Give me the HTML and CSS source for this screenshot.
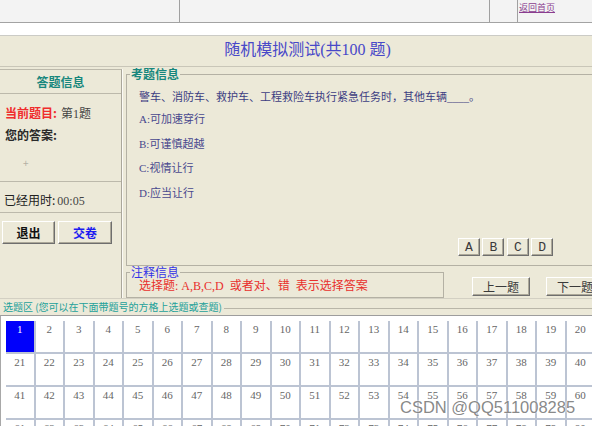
FILE: index.html
```html
<!DOCTYPE html>
<html lang="zh-CN">
<head>
<meta charset="utf-8">
<title>随机模拟测试</title>
<link rel="stylesheet" href="styles.css">
</head>
<body>
<div class="page">
  <div class="topbar">
    <div class="tb-cell"></div>
    <div class="tb-cell"></div>
    <div class="tb-cell"></div>
    <div class="tb-cell tb-link"><a href="#">返回首页</a></div>
  </div>
  <div class="exam">
    <h1 class="title">随机模拟测试(共100 题)</h1>
    <div class="main">
      <aside class="side">
        <div class="side-head">答题信息</div>
        <div class="side-info">
          <p class="row"><span class="lbl-red">当前题目:</span><span class="val">第1题</span></p>
          <p class="row lbl-bold">您的答案:</p>
          <p class="row plus">+</p>
        </div>
        <div class="side-time"><span>已经用时:</span><span class="val">00:05</span></div>
        <div class="side-btns">
          <button class="btn btn-side">退出</button>
          <button class="btn btn-side btn-blue">交卷</button>
        </div>
      </aside>
      <div class="content">
        <fieldset class="fs fs-q">
          <legend class="lg lg-teal">考题信息</legend>
          <p class="q">警车、消防车、救护车、工程救险车执行紧急任务时，其他车辆____。</p>
          <ul class="opts">
            <li>A:可加速穿行</li>
            <li>B:可谨慎超越</li>
            <li>C:视情让行</li>
            <li>D:应当让行</li>
          </ul>
          <div class="abcd">
            <button class="btn btn-opt">A</button>
            <button class="btn btn-opt">B</button>
            <button class="btn btn-opt">C</button>
            <button class="btn btn-opt">D</button>
          </div>
        </fieldset>
        <div class="note-row">
          <fieldset class="fs fs-note">
            <legend class="lg lg-blue">注释信息</legend>
            <p class="note">选择题: A,B,C,D &nbsp;或者对、错 &nbsp;表示选择答案</p>
          </fieldset>
          <button class="btn btn-nav btn-prev">上一题</button>
          <button class="btn btn-nav btn-next">下一题</button>
        </div>
      </div>
    </div>
    <div class="pick">
      <div class="pick-head"><span class="pick-title">选题区 (您可以在下面带题号的方格上选题或查题)</span><span class="rule"></span></div>
      <div class="grid">
        <div class="cell cell-on">1</div><div class="cell">2</div><div class="cell">3</div><div class="cell">4</div><div class="cell">5</div><div class="cell">6</div><div class="cell">7</div><div class="cell">8</div><div class="cell">9</div><div class="cell">10</div>
        <div class="cell">11</div><div class="cell">12</div><div class="cell">13</div><div class="cell">14</div><div class="cell">15</div><div class="cell">16</div><div class="cell">17</div><div class="cell">18</div><div class="cell">19</div><div class="cell">20</div>
        <div class="cell">21</div><div class="cell">22</div><div class="cell">23</div><div class="cell">24</div><div class="cell">25</div><div class="cell">26</div><div class="cell">27</div><div class="cell">28</div><div class="cell">29</div><div class="cell">30</div>
        <div class="cell">31</div><div class="cell">32</div><div class="cell">33</div><div class="cell">34</div><div class="cell">35</div><div class="cell">36</div><div class="cell">37</div><div class="cell">38</div><div class="cell">39</div><div class="cell">40</div>
        <div class="cell">41</div><div class="cell">42</div><div class="cell">43</div><div class="cell">44</div><div class="cell">45</div><div class="cell">46</div><div class="cell">47</div><div class="cell">48</div><div class="cell">49</div><div class="cell">50</div>
        <div class="cell">51</div><div class="cell">52</div><div class="cell">53</div><div class="cell">54</div><div class="cell">55</div><div class="cell">56</div><div class="cell">57</div><div class="cell">58</div><div class="cell">59</div><div class="cell">60</div>
        <div class="cell">61</div><div class="cell">62</div><div class="cell">63</div><div class="cell">64</div><div class="cell">65</div><div class="cell">66</div><div class="cell">67</div><div class="cell">68</div><div class="cell">69</div><div class="cell">70</div>
        <div class="cell">71</div><div class="cell">72</div><div class="cell">73</div><div class="cell">74</div><div class="cell">75</div><div class="cell">76</div><div class="cell">77</div><div class="cell">78</div><div class="cell">79</div><div class="cell">80</div>
      </div>
    </div>
  </div>
  <div class="wm">CSDN @QQ511008285</div>
</div>
</body>
</html>
```

FILE: styles.css
```css
* { box-sizing: border-box; }
html, body { margin: 0; padding: 0; overflow: hidden; background: #fff; }
body {
  font-family: "Noto Sans CJK SC", "Liberation Sans", sans-serif;
  font-size: 12px;
  color: #222;
}
p { margin: 0; }

.page { width: 615px; position: relative; }

/* top strip */
.topbar {
  display: grid;
  grid-template-columns: 180px 310px 28px 1fr;
  height: 23px;
  background: #f3f3f3;
  border-bottom: 1px solid #a3a3a3;
}
.tb-cell { border-right: 1px solid #a0a0a0; }
.tb-cell:last-child { border-right: 0; }
.tb-link { padding-left: 1px; font-size: 9px; line-height: 15px; }
.tb-link a { color: #8a3d8f; text-decoration: underline; }

/* exam panel */
.exam {
  margin-top: 12px;
  background: #ece9d8;
  border-top: 1px solid #cbcbc6;
}
.title {
  margin: 0;
  height: 31px;
  border-bottom: 1px solid #c9c6b8;
  font: normal 16px/27px "Liberation Serif", "Noto Sans CJK SC", serif;
  color: #4848c8;
  text-align: center;
}
.main {
  display: flex;
  margin-top: 1px;
  border-bottom: 1px solid #d3d0c3;
}

/* left side */
.side {
  width: 122px;
  margin-top: 1px;
  display: flex;
  flex-direction: column;
  border-top: 1px solid #bcb9ab;
  border-right: 1px solid #aaa79b;
  box-shadow: 1px 0 0 #fbfaf5;
}
.side-head {
  height: 24px;
  line-height: 23px;
  text-align: center;
  color: #17877d;
  font-weight: bold;
  border-bottom: 1px solid #bcb9ab;
}
.side-info {
  height: 88px;
  padding: 11px 0 0 5px;
  border-bottom: 1px solid #bcb9ab;
}
.row { line-height: 16px; }
.row + .row { margin-top: 5px; }
.lbl-red { color: #f02c2c; font-weight: bold; }
.lbl-bold { color: #2a2a2a; font-weight: bold; }
.val {
  margin-left: 4px;
  font-family: "Liberation Serif", "Noto Sans CJK SC", serif;
  color: #444;
}
.row.plus { margin-top: 12px; padding-left: 18px; font-size: 10px; color: #b3b0a3; }
.side-time {
  height: 31px;
  padding: 10px 0 0 4px;
  line-height: 16px;
  border-bottom: 1px solid #bcb9ab;
}
.side-time .val { margin-left: 2px; }
.side-btns {
  flex: 1;
  display: flex;
  gap: 3px;
  padding: 8px 0 0 2px;
  align-items: flex-start;
}

/* buttons */
.btn {
  margin: 0;
  padding: 0;
  background: #ece9d8;
  border: 1px solid;
  border-color: #ffffff #6e6e6e #6e6e6e #ffffff;
  box-shadow: inset -1px -1px 0 #aca899;
  font-family: "Noto Sans CJK SC", sans-serif;
  font-size: 12px;
  line-height: 1;
  color: #333;
}
.btn-side { width: 53px; height: 23px; font-weight: bold; color: #111; }
.btn-side + .btn-side { width: 54px; }
.btn-blue { color: #1c1cf0; }
.btn-opt {
  width: 22px;
  height: 18px;
  font-family: "Liberation Mono", monospace;
  font-size: 13px;
  color: #3a3a3a;
}
.btn-nav { width: 58px; height: 19px; margin-top: 11px; color: #3a3a3a; }
.btn-prev { margin-left: 28px; }
.btn-next { margin-left: 16px; }

/* right content */
.content { flex: 1; margin-left: 4px; }
.fs {
  margin: 0;
  min-width: 0;
  border: 1px solid #b4b1a4;
}
.fs-q { padding: 9px 0 9px 12px; }
.lg {
  margin-left: -9px;
  padding: 0 1px;
  font-size: 12px;
  line-height: 12px;
}
.lg-teal { color: #17877d; font-weight: bold; }
.lg-blue { color: #3434e6; }
.q, .opts {
  font-family: "Liberation Serif", "Noto Sans CJK SC", serif;
  font-size: 11px;
  line-height: 16px;
  color: #3d3d82;
}
.q { margin-bottom: 6px; }
.opts { margin: 0; padding: 0; list-style: none; color: #48488e; }
.opts li { margin-bottom: 8.5px; }
.opts li:last-child { margin-bottom: 0; }
.abcd {
  display: flex;
  gap: 2.4px;
  margin: 37.5px 0 0 319px;
}

.note-row { display: flex; align-items: flex-start; }
.fs-note { width: 318px; padding: 2px 0 4px 12px; }
.note {
  font-family: "Liberation Serif", "Noto Sans CJK SC", serif;
  font-size: 12px;
  line-height: 13px;
  color: #e8302c;
}

/* pick area */
.pick-head {
  display: flex;
  align-items: flex-start;
  height: 16px;
  padding: 2px 0 0 3px;
}
.pick-title {
  font-size: 10px;
  line-height: 12px;
  color: #23a19a;
  white-space: nowrap;
}
.rule {
  flex: 1;
  margin: 7px 0 0 2px;
  border-top: 1px solid #b9b6a8;
}
.grid {
  display: grid;
  grid-template-columns: repeat(20, 29.5px);
  background: #fff;
  border-top: 1px solid #9d9d9d;
  border-left: 1px solid #a8a8a8;
  padding: 5px 0 0 5px;
}
.cell {
  height: 33px;
  padding-top: 2px;
  border-right: 2px solid #bcc4d3;
  border-bottom: 2px solid #bcc4d3;
  text-align: center;
  font-family: "Liberation Serif", serif;
  font-size: 11px;
  line-height: 12px;
  color: #666;
}
.cell-on { background: #0000fb; color: #fff; }

/* watermark */
.wm {
  position: absolute;
  left: 400px;
  top: 397px;
  font-family: "Liberation Sans", sans-serif;
  font-size: 16.5px;
  line-height: 20px;
  color: rgba(105, 105, 105, 0.8);
  text-shadow: 0 0 2px #fff, 0 0 1px #fff;
}
```
